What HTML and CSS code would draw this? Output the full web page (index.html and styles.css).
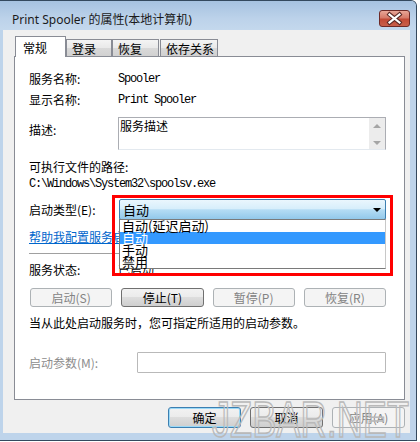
FILE: index.html
```html
<!DOCTYPE html>
<html lang="zh-CN">
<head>
<meta charset="utf-8">
<title>Print Spooler 的属性</title>
<link rel="stylesheet" href="styles.css">
</head>
<body>
<div class="window">
  <div class="titlebar">
    <span class="title">Print Spooler 的属性(本地计算机)</span>
    <span class="close">
      <svg width="29" height="15" viewBox="0 0 29 15">
        <path d="M9.5 3.5 L19.5 11.5 M19.5 3.5 L9.5 11.5" stroke="#5a2a26" stroke-width="4.2" stroke-linecap="square" fill="none"/>
        <path d="M9.5 3.5 L19.5 11.5 M19.5 3.5 L9.5 11.5" stroke="#ffffff" stroke-width="2.2" stroke-linecap="square" fill="none"/>
      </svg>
    </span>
  </div>
  <div class="client">
    <div class="tabs">
      <div class="tab active w1">常规</div>
      <div class="tab w2">登录</div>
      <div class="tab w3">恢复</div>
      <div class="tab w4">依存关系</div>
    </div>
    <div class="panel">
      <div class="row r1"><span class="label">服务名称:</span><span class="mono">Spooler</span></div>
      <div class="row r2"><span class="label">显示名称:</span><span class="mono">Print Spooler</span></div>
      <div class="row r3">
        <span class="label top">描述:</span>
        <div class="textarea">
          <div class="ta-text">服务描述</div>
          <div class="scrollbar">
            <span class="arr up"></span>
            <span class="arr down"></span>
          </div>
        </div>
      </div>
      <div class="row r4">可执行文件的路径:</div>
      <div class="row r5"><span class="mono">C:\Windows\System32\spoolsv.exe</span></div>
      <div class="row r6">
        <span class="label">启动类型(E):</span>
        <div class="combo-wrap">
          <div class="combo"><span>自动</span><span class="caret"></span></div>
          <div class="dropdown">
            <div class="item">自动(延迟启动)</div>
            <div class="item sel">自动</div>
            <div class="item">手动</div>
            <div class="item">禁用</div>
          </div>
          <div class="redbox"></div>
        </div>
      </div>
      <div class="row r7"><a class="link">帮助我配置服务启动选项。</a></div>
      <div class="sep"></div>
      <div class="row r8"><span class="label">服务状态:</span><span>已启动</span></div>
      <div class="svc-buttons">
        <div class="btn disabled">启动(S)</div>
        <div class="btn">停止(T)</div>
        <div class="btn disabled">暂停(P)</div>
        <div class="btn disabled">恢复(R)</div>
      </div>
      <div class="row r9">当从此处启动服务时，您可指定所适用的启动参数。</div>
      <div class="row r10">
        <span class="label wide dim">启动参数(M):</span>
        <div class="input"></div>
      </div>
    </div>
    <div class="dlg-buttons">
      <div class="btn dbtn default">确定</div>
      <div class="btn dbtn">取消</div>
      <div class="btn dbtn disabled">应用(A)</div>
    </div>
    <div class="watermark">JZBAR.NET</div>
  </div>
</div>
</body>
</html>
```

FILE: styles.css
```css
body {
  margin: 0;
  background: #ffffff;
  font-family: "Noto Sans CJK SC", sans-serif;
  font-size: 12px;
  color: #000;
}

.window {
  width: 416px;
  height: 439px;
  border: 1px solid #34495e;
  border-left: none;
  border-radius: 0 6px 0 0;
  background: #bed4eb;
  display: flex;
  flex-direction: column;
  overflow: hidden;
}

.titlebar {
  height: 29px;
  flex: none;
  background: linear-gradient(#a6c2e0, #bcd2ea 60%, #c4d8ed);
  display: flex;
  align-items: flex-start;
  justify-content: space-between;
}

.title {
  margin: 11px 0 0 12px;
  line-height: 16px;
  font-family: "Noto Sans", "Noto Sans CJK SC", sans-serif;
  font-size: 12px;
  color: #1b1b1b;
}

.close {
  margin: 9px 6px 0 0;
  width: 31px;
  height: 17px;
  box-sizing: border-box;
  border: 1px solid #6e2a27;
  border-radius: 3px;
  background: linear-gradient(#e9a697, #d67a69 45%, #c24a36 55%, #c8604b);
  display: flex;
}

.client {
  margin-left: 3px;
  width: 407px;
  height: 403px;
  flex: none;
  background: #f0f0f0;
  position: relative;
  display: flex;
  flex-direction: column;
}

.tabs {
  display: flex;
  align-items: flex-end;
  height: 21px;
  margin: 6px 0 -1px 12px;
  position: relative;
  z-index: 1;
}

.tab {
  box-sizing: border-box;
  height: 17px;
  margin-bottom: 1px;
  border: 1px solid #898c95;
  border-bottom: none;
  background: linear-gradient(#f4f4f4, #e9e9e9 50%, #d9d9d9 50%, #d1d1d1);
  padding: 1px 0 0 5px;
  line-height: 15px;
}

.tab.active {
  height: 21px;
  margin-bottom: 0;
  background: #ffffff;
  padding: 2px 0 0 7px;
  line-height: 17px;
}

.w1 { width: 51px; }
.w2 { width: 46px; }
.w3 { width: 47px; }
.w4 { width: 58px; margin-left: 1px; }

.panel {
  box-sizing: border-box;
  margin-left: 11px;
  width: 391px;
  height: 344px;
  flex: none;
  border: 1px solid #898c95;
  background: #ffffff;
  padding: 0 18px 0 14px;
  display: flex;
  flex-direction: column;
}

.row {
  display: flex;
  align-items: center;
  height: 16px;
  line-height: 16px;
  flex: none;
}

.label {
  width: 89px;
  flex: none;
}

.label.top { align-self: flex-start; margin-top: 5px; line-height: 16px; }
.label.wide { width: 108px; }
.dim { color: #8d8d8d; }

.mono {
  font-family: "Liberation Mono", monospace;
  font-size: 12px;
  letter-spacing: -1.2px;
}

.r1 { margin-top: 14px; }
.r2 { margin-top: 5px; }
.r3 { margin-top: 9px; height: 33px; align-items: flex-start; }
.r4 { margin-top: 9px; }
.r5 { margin-top: 1px; }
.r6 { margin-top: 7px; height: 21px; position: relative; z-index: 2; }
.r7 { margin-top: 9px; }
.r8 { margin-top: 7px; }
.r9 { margin-top: 8px; }
.r10 { margin-top: 21px; height: 21px; }

.textarea {
  box-sizing: border-box;
  width: 268px;
  height: 33px;
  border: 1px solid #abadb3;
  border-bottom-color: #e3e9ef;
  display: flex;
}

.ta-text {
  flex: 1;
  padding: 1px 0 0 1px;
  line-height: 14px;
}

.scrollbar {
  width: 16px;
  background: #ececec;
  display: flex;
  flex-direction: column;
  align-items: center;
  justify-content: space-between;
  padding: 6px 0 4px;
}

.arr {
  width: 0;
  height: 0;
  border-left: 4px solid transparent;
  border-right: 4px solid transparent;
}
.arr.up { border-bottom: 4px solid #a5a5a5; }
.arr.down { border-top: 4px solid #a5a5a5; }

.combo-wrap {
  position: relative;
  margin-left: 1px;
  width: 267px;
  height: 21px;
}

.combo {
  box-sizing: border-box;
  height: 21px;
  border: 1px solid #3c7fb1;
  border-radius: 2px;
  background: linear-gradient(#eaf6fd, #d7eefb 45%, #b4dcf4 52%, #92c8ea);
  display: flex;
  align-items: center;
  justify-content: space-between;
  padding: 0 4px 0 3px;
  font-size: 13px;
}

.caret {
  width: 0;
  height: 0;
  border-left: 4px solid transparent;
  border-right: 4px solid transparent;
  border-top: 4px solid #000;
  margin-top: 1px;
}

.dropdown {
  position: absolute;
  left: 0;
  top: 20px;
  box-sizing: border-box;
  width: 267px;
  border: 1px solid #7a7a7a;
  border-right-color: #c8c8c8;
  background: #ffffff;
}

.item {
  height: 12px;
  line-height: 12px;
  padding-left: 2px;
  font-size: 13px;
  white-space: nowrap;
}

.item.sel {
  background: #3399ff;
  color: #ffffff;
}

.redbox {
  position: absolute;
  left: -7px;
  top: -4px;
  width: 281px;
  height: 81px;
  box-sizing: border-box;
  border: 3px solid #ff0000;
  pointer-events: none;
}

.link {
  color: #0066cc;
  text-decoration: underline;
  white-space: nowrap;
}

.sep {
  margin-top: 8px;
  height: 1px;
  background: #a0a0a0;
  border-bottom: 1px solid #ffffff;
  flex: none;
}

.svc-buttons {
  margin: 10px 0 0 1px;
  height: 19px;
  display: grid;
  grid-template-columns: repeat(4, 1fr);
  gap: 9px;
  flex: none;
}

.btn {
  box-sizing: border-box;
  border: 1px solid #707070;
  border-radius: 3px;
  background: linear-gradient(#f2f2f2, #ebebeb 50%, #dddddd 50%, #cfcfcf);
  display: flex;
  align-items: center;
  justify-content: center;
  line-height: 14px;
}

.btn.disabled {
  border-color: #adb2b5;
  background: #f4f4f4;
  color: #838383;
}

.input {
  flex: 1;
  height: 21px;
  box-sizing: border-box;
  border: 1px solid #b9b9b9;
  border-radius: 1px;
  background: #ffffff;
}

.dlg-buttons {
  margin: 7px 5px 0 0;
  display: flex;
  justify-content: flex-end;
  gap: 9px;
  flex: none;
}

.dbtn {
  width: 73px;
  height: 21px;
}

.dbtn.default {
  border-color: #3c7fb1;
  box-shadow: inset 0 0 0 1px #9bd9f7;
}

.watermark {
  position: absolute;
  left: 209px;
  top: 365px;
  font-family: "Liberation Sans", sans-serif;
  font-size: 50px;
  line-height: 50px;
  color: transparent;
  -webkit-text-stroke: 1.6px #b9b9b9;
  transform: scaleX(0.724);
  transform-origin: 0 0;
  white-space: nowrap;
  pointer-events: none;
  z-index: 3;
}
```
